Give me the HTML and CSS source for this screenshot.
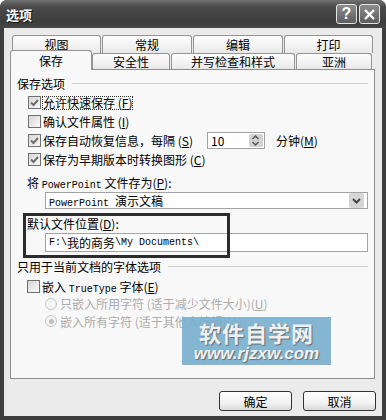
FILE: index.html
```html
<!DOCTYPE html>
<html lang="zh-CN">
<head>
  <meta charset="UTF-8">
  <title>选项</title>
  <link rel="stylesheet" href="styles.css">
</head>
<body>
  <div class="window">
    <div class="titlebar">
      <span class="title">选项</span>
      <div class="title-btns">
        <span class="tbtn">?</span>
        <span class="tbtn">
          <svg width="13" height="13" viewBox="0 0 13 13"><path d="M2 2 L11 11 M11 2 L2 11" stroke="#fff" stroke-width="2.4" fill="none"/></svg>
        </span>
      </div>
    </div>
    <div class="client">
      <div class="tab-row back">
        <div class="tab t89">视图</div>
        <div class="tab t90">常规</div>
        <div class="tab t90">编辑</div>
        <div class="tab t89">打印</div>
      </div>
      <div class="tab-row front">
        <div class="tab active">保存</div>
        <div class="tab t78">安全性</div>
        <div class="tab t124">并写检查和样式</div>
        <div class="tab t76">亚洲</div>
      </div>
      <div class="panel">
        <div class="group-title">保存选项</div>
        <div class="checks">
          <div class="check-row">
            <span class="box checked"><svg width="11" height="11" viewBox="0 0 11 11"><path d="M2 5.5 L4.5 8 L9 3" stroke="#6f6f6f" stroke-width="2" fill="none"/></svg></span>
            <span class="focus">允许快速保存 (<u>F</u>)</span>
          </div>
          <div class="check-row">
            <span class="box"></span>
            <span>确认文件属性 (<u>I</u>)</span>
          </div>
          <div class="check-row">
            <span class="box checked"><svg width="11" height="11" viewBox="0 0 11 11"><path d="M2 5.5 L4.5 8 L9 3" stroke="#6f6f6f" stroke-width="2" fill="none"/></svg></span>
            <span>保存自动恢复信息，每隔 (<u>S</u>)</span>
            <span class="spinner">
              <span class="spin-val">10</span>
              <span class="spin-btn">
                <svg width="9" height="13" viewBox="0 0 9 13"><path d="M1.5 5 L4.5 2 L7.5 5 M1.5 8 L4.5 11 L7.5 8" stroke="#555" stroke-width="1.5" fill="none"/></svg>
              </span>
            </span>
            <span class="minutes">分钟(<u>M</u>)</span>
          </div>
          <div class="check-row">
            <span class="box checked"><svg width="11" height="11" viewBox="0 0 11 11"><path d="M2 5.5 L4.5 8 L9 3" stroke="#6f6f6f" stroke-width="2" fill="none"/></svg></span>
            <span>保存为早期版本时转换图形 (<u>C</u>)</span>
          </div>
        </div>
        <div class="label label-save">将 <span class="mono">PowerPoint</span> 文件存为(<u>P</u>):</div>
        <div class="select">
          <span><span class="mono">PowerPoint </span>演示文稿</span>
          <span class="drop-btn">
            <svg width="11" height="8" viewBox="0 0 11 8"><path d="M2 2 L5.5 5.5 L9 2" stroke="#444" stroke-width="2" fill="none"/></svg>
          </span>
        </div>
        <div class="label label-path">默认文件位置(<u>D</u>):</div>
        <div class="field"><span class="mono">F:\</span>我的商务<span class="mono">\My Documents\</span></div>
        <div class="group-title group-font">只用于当前文档的字体选项</div>
        <div class="check-row embed">
          <span class="box"></span>
          <span>嵌入 <span class="mono">TrueType</span> 字体(<u>E</u>)</span>
        </div>
        <div class="radio-row">
          <span class="radio"></span>
          <span>只嵌入所用字符 (适于减少文件大小)(<u>U</u>)</span>
        </div>
        <div class="radio-row">
          <span class="radio on"></span>
          <span>嵌入所有字符 (适于其他人编辑)(<u>A</u>)</span>
        </div>
        <div class="highlight"></div>
        <div class="watermark">
          <div class="wm-cn">软件自学网</div>
          <div class="wm-url">www.rjzxw.com</div>
        </div>
      </div>
      <div class="buttons">
        <button class="btn">确定</button>
        <button class="btn">取消</button>
      </div>
    </div>
  </div>
</body>
</html>
```

FILE: styles.css
```css
* {
  margin: 0;
  padding: 0;
  box-sizing: border-box;
}
body {
  background: #fff;
  font-family: "Noto Sans CJK SC", sans-serif;
  font-size: 12px;
  color: #000;
}
.window {
  width: 386px;
  height: 420px;
  background: #3e3e3e;
  border-radius: 7px 7px 0 0;
  display: flex;
  flex-direction: column;
}
.titlebar {
  height: 28px;
  display: flex;
  align-items: center;
  justify-content: space-between;
  padding: 0 6px;
  border-radius: 7px 7px 0 0;
  background: linear-gradient(#707070, #4a4a4a 25%, #3d3d3d 80%, #474747);
}
.title {
  color: #fff;
  font-weight: bold;
  font-size: 13px;
  text-shadow: 1px 1px 0 #111;
}
.title-btns {
  display: flex;
  gap: 2px;
}
.tbtn {
  width: 21px;
  height: 20px;
  border: 1px solid #e4e4e4;
  border-radius: 3px;
  background: linear-gradient(#8c8c8c, #5e5e5e);
  color: #fff;
  display: flex;
  align-items: center;
  justify-content: center;
  font: bold 16px "Liberation Sans", sans-serif;
}
.client {
  flex: 1;
  margin: 0 4px 4px;
  background: #ebebeb;
  padding: 7px 7px 0 6px;
}

/* tabs */
.tab-row {
  display: flex;
}
.tab-row.back {
  height: 18px;
  padding-left: 2px;
  gap: 1px;
}
.tab-row.front {
  height: 16px;
  align-items: flex-end;
}
.tab {
  height: 100%;
  border: 1px solid #949494;
  border-bottom: none;
  border-radius: 3px 3px 0 0;
  background: linear-gradient(#fefefe, #e9e9e9);
  display: flex;
  align-items: center;
  justify-content: center;
  line-height: 14px;
}
.front .tab {
  height: 16px;
}
.front .tab.active {
  width: 82px;
  height: 20px;
  margin-bottom: -1px;
  background: #f8f8f8;
  position: relative;
  z-index: 1;
}
.t89 { width: 89px; }
.t90 { width: 90px; }
.t78 { width: 78px; }
.t124 { width: 124px; margin-left: 1px; }
.t76 { width: 76px; margin-left: 1px; }

/* panel */
.panel {
  position: relative;
  height: 310px;
  border: 1px solid #8e8e8e;
  background: #f8f8f8;
  padding: 0 6px;
}
.group-title {
  display: flex;
  align-items: center;
  height: 14px;
  margin-top: 6px;
}
.group-title::after {
  content: "";
  flex: 1;
  height: 1px;
  background: #cfcfcf;
  margin-left: 7px;
}
.group-font {
  margin-top: 7px;
}
.checks {
  margin-top: 3px;
}
.check-row {
  display: flex;
  align-items: center;
  height: 19px;
  padding-left: 11px;
  gap: 2px;
}
.check-row.embed {
  height: 18px;
  margin-top: 4px;
  padding-left: 10px;
}
.box {
  width: 13px;
  height: 13px;
  border: 1px solid #707070;
  background: linear-gradient(135deg, #d6d6d6, #f9f9f9);
  display: flex;
  align-items: center;
  justify-content: center;
}
.focus {
  outline: 1px dotted #333;
  line-height: 12px;
}
.spinner {
  display: flex;
  align-items: center;
  justify-content: space-between;
  width: 58px;
  height: 17px;
  margin-left: 12px;
  border: 1px solid #a3a3a3;
  background: #fff;
  padding: 1px 1px 1px 3px;
}
.spin-btn {
  width: 14px;
  height: 100%;
  background: #d3d3d3;
  border-radius: 2px;
  display: flex;
  align-items: center;
  justify-content: center;
}
.minutes {
  margin-left: 9px;
}
.mono {
  font-family: "Liberation Mono", monospace;
  font-size: 10px;
}
.label {
  height: 14px;
  line-height: 14px;
  padding-left: 10px;
}
.label-save {
  margin-top: 7px;
}
.label-path {
  margin-top: 8px;
}
.select, .field {
  margin-left: 28px;
  border: 1px solid #a3a3a3;
  background: #fff;
  display: flex;
  align-items: center;
  padding-left: 3px;
}
.select {
  height: 17px;
  margin-top: 2px;
  justify-content: space-between;
  padding-right: 3px;
}
.drop-btn {
  width: 15px;
  height: 15px;
  background: #d6d6d6;
  border-radius: 2px;
  display: flex;
  align-items: center;
  justify-content: center;
}
.field {
  height: 19px;
  margin-top: 2px;
}
.radio-row {
  display: flex;
  align-items: center;
  height: 17.5px;
  padding-left: 28px;
  gap: 3px;
  color: #adadad;
}
.radio {
  width: 12px;
  height: 12px;
  border: 1px solid #c6c6c6;
  border-radius: 50%;
  background: #f4f4f4;
  display: flex;
  align-items: center;
  justify-content: center;
}
.radio.on::after {
  content: "";
  width: 5px;
  height: 5px;
  border-radius: 50%;
  background: #bdbdbd;
}

/* annotation overlays */
.highlight {
  position: absolute;
  left: 12px;
  top: 143px;
  width: 207px;
  height: 45px;
  border: 3px solid #2c2c2c;
}
.watermark {
  position: absolute;
  left: 171px;
  top: 247px;
  width: 149px;
  height: 48px;
  padding-top: 2px;
  background: rgba(122, 176, 206, 0.92);
  color: #f0f0f0;
  text-align: center;
  text-shadow: 1px 1px 1px #6a6a6a;
}
.wm-cn {
  font-weight: bold;
  font-size: 22px;
  line-height: 26px;
  letter-spacing: 1px;
}
.wm-url {
  font: italic bold 17px "Liberation Sans", sans-serif;
  line-height: 18px;
}

/* buttons */
.buttons {
  display: flex;
  justify-content: flex-end;
  gap: 11px;
  margin-top: 12px;
  margin-right: -1px;
}
.btn {
  width: 73px;
  height: 20px;
  border: 1px solid #333;
  border-radius: 3px;
  background: linear-gradient(#fff, #f2f2f2 60%, #d9d9d9);
  font-family: "Noto Sans CJK SC", sans-serif;
  font-size: 12px;
  color: #000;
}
```
